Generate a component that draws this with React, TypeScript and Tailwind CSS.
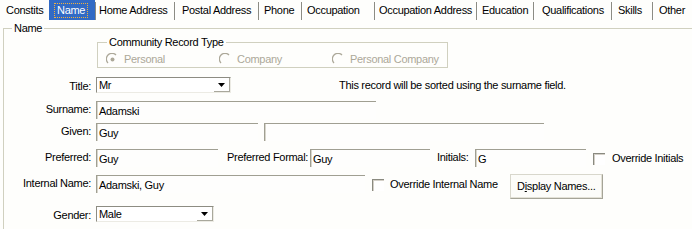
const tabs = [
  { label: "Constits", w: "w-[49px]", pl: "pl-[6px]" },
  { label: "Name", w: "w-[46px]", pl: "pl-[5px]", active: true },
  { label: "Home Address", w: "w-[77px]", pl: "pl-[2px]" },
  { label: "Postal Address", w: "w-[82px]", pl: "pl-[6px]" },
  { label: "Phone", w: "w-[41px]", pl: "pl-[4px]" },
  { label: "Occupation", w: "w-[71px]", pl: "pl-[4px]" },
  { label: "Occupation Address", w: "w-[100px]", pl: "pl-[3px]" },
  { label: "Education", w: "w-[55px]", pl: "pl-[4px]" },
  { label: "Qualifications", w: "w-[76px]", pl: "pl-[7px]" },
  { label: "Skills", w: "w-[39px]", pl: "pl-[5px]" },
  { label: "Other", w: "w-[38px]", pl: "pl-[5px]" },
];

function Radio({ checked }: { checked?: boolean }) {
  return (
    <svg width="13" height="13" viewBox="0 0 13 13" className="shrink-0">
      <path d="M2 10 A5.5 5.5 0 0 1 10 2" fill="none" stroke="#aca899" strokeWidth="1.3" />
      {checked && <circle cx="6.5" cy="6.5" r="2" fill="#aca899" />}
    </svg>
  );
}

function Checkbox() {
  return (
    <span className="w-[12px] h-[12px] shrink-0 border-t border-l border-[#8a8a80] bg-white shadow-[inset_1px_1px_0_#d4d0c8]" />
  );
}

function TextBox({ value, w }: { value?: string; w: string }) {
  return (
    <div
      className={`${w} h-[18px] shrink-0 border-t border-l border-[#a09f92] shadow-[inset_1px_0_0_#d8d6cc] pl-[2px] pt-[3px] leading-[13px] whitespace-nowrap bg-[#fefefd]`}
    >
      {value}
    </div>
  );
}

function Select({ value, w }: { value: string; w: string }) {
  return (
    <div
      className={`${w} h-[16px] shrink-0 flex border-t border-l border-[#8d8c82] border-r border-b border-r-[#ecebe4] border-b-[#ecebe4] bg-white`}
    >
      <div className="flex-1 pl-[2px] leading-[14px]">{value}</div>
      <div className="w-[16px] h-full flex items-center justify-center border-r border-b border-[#a9a89c] shadow-[inset_1px_1px_0_#ffffff]">
        <svg width="7" height="4" viewBox="0 0 7 4">
          <path d="M0 0 H7 L3.5 4 Z" fill="#000" />
        </svg>
      </div>
    </div>
  );
}

function Label({ children }: { children: string }) {
  return (
    <div className="w-[88px] shrink-0 text-right pr-[1px] mr-[4px] pt-[2px] whitespace-nowrap">
      {children}
    </div>
  );
}

export default function App() {
  return (
    <div
      className="w-[692px] h-[229px] overflow-hidden bg-[#fefefc] text-black text-[11px] leading-[13px] tracking-[-0.3px]"
      style={{ fontFamily: '"Liberation Sans", Arial, sans-serif' }}
    >
      {/* tab strip */}
      <div className="flex h-[20px]">
        {tabs.map((t) => (
          <div key={t.label} className="flex items-stretch shrink-0">
            <div
              className={`${t.w} ${t.pl} flex items-center whitespace-nowrap overflow-hidden ${
                t.active ? "bg-[#316ac5] text-white" : ""
              }`}
            >
              {t.active ? (
                <span className="border border-dotted border-[#f0b040] px-[2px] leading-[13px]">
                  {t.label}
                </span>
              ) : (
                t.label
              )}
            </div>
            {t.label !== "Constits" && t.label !== "Other" && (
              <div className="w-[2px] mt-[2px] border-l border-[#8c8c84] border-r border-r-white" />
            )}
          </div>
        ))}
      </div>

      <fieldset className="ml-[3px] mt-[2px] border-t border-l border-[#d0d0bf] h-[220px]">
        <legend className="ml-[8px] px-[2px] leading-[13px]">Name</legend>

        <fieldset className="ml-[93px] mt-[1px] w-[351px] h-[32px] border border-[#d0d0bf]">
          <legend className="ml-[9px] px-[2px] leading-[13px]">Community Record Type</legend>
          <div className="flex items-center h-[16px] pl-[8px] mt-[2px] text-[#aca899] whitespace-nowrap">
            <div className="w-[113px] flex items-center gap-[5px]">
              <Radio checked />
              <span>Personal</span>
            </div>
            <div className="w-[113px] flex items-center gap-[5px]">
              <Radio />
              <span>Company</span>
            </div>
            <div className="flex items-center gap-[5px]">
              <Radio />
              <span>Personal Company</span>
            </div>
          </div>
        </fieldset>

        {/* Title */}
        <div className="flex items-center mt-[9px] h-[16px] whitespace-nowrap">
          <Label>Title:</Label>
          <Select value="Mr" w="w-[135px]" />
          <div className="ml-[108px]">This record will be sorted using the surname field.</div>
        </div>

        {/* Surname */}
        <div className="flex items-start mt-[8px] h-[18px]">
          <Label>Surname:</Label>
          <TextBox value="Adamski" w="w-[280px]" />
        </div>

        {/* Given */}
        <div className="flex items-start mt-[4px] h-[18px]">
          <Label>Given:</Label>
          <TextBox value="Guy" w="w-[162px]" />
          <div className="ml-[6px]">
            <TextBox w="w-[280px]" />
          </div>
        </div>

        {/* Preferred */}
        <div className="flex items-start mt-[8px] h-[18px] whitespace-nowrap">
          <Label>Preferred:</Label>
          <TextBox value="Guy" w="w-[122px]" />
          <div className="ml-[9px] pt-[2px] w-[83px] shrink-0">Preferred Formal:</div>
          <TextBox value="Guy" w="w-[120px]" />
          <div className="ml-[7px] pt-[2px] w-[38px] shrink-0">Initials:</div>
          <TextBox value="G" w="w-[111px]" />
          <div className="ml-[7px] mt-[3px] flex items-center gap-[7px] shrink-0">
            <Checkbox />
            <span>Override Initials</span>
          </div>
        </div>

        {/* Internal name */}
        <div className="flex items-start mt-[8px] h-[18px] whitespace-nowrap">
          <Label>Internal Name:</Label>
          <TextBox value="Adamski, Guy" w="w-[269px]" />
          <div className="ml-[7px] mt-[3px] flex items-center gap-[6px] shrink-0">
            <Checkbox />
            <span>Override Internal Name</span>
          </div>
          <button className="ml-[12px] -mt-[1px] w-[93px] h-[25px] shrink-0 border border-[#d8d7cc] border-r-[#a5a497] border-b-[#a5a497] bg-[#fcfcf9] shadow-[inset_-1px_-1px_0_#e3e1d6]">
            D<span className="underline">i</span>splay Names...
          </button>
        </div>

        {/* Gender */}
        <div className="flex items-center mt-[13px] h-[16px]">
          <Label>Gender:</Label>
          <Select value="Male" w="w-[118px]" />
        </div>
      </fieldset>
    </div>
  );
}
